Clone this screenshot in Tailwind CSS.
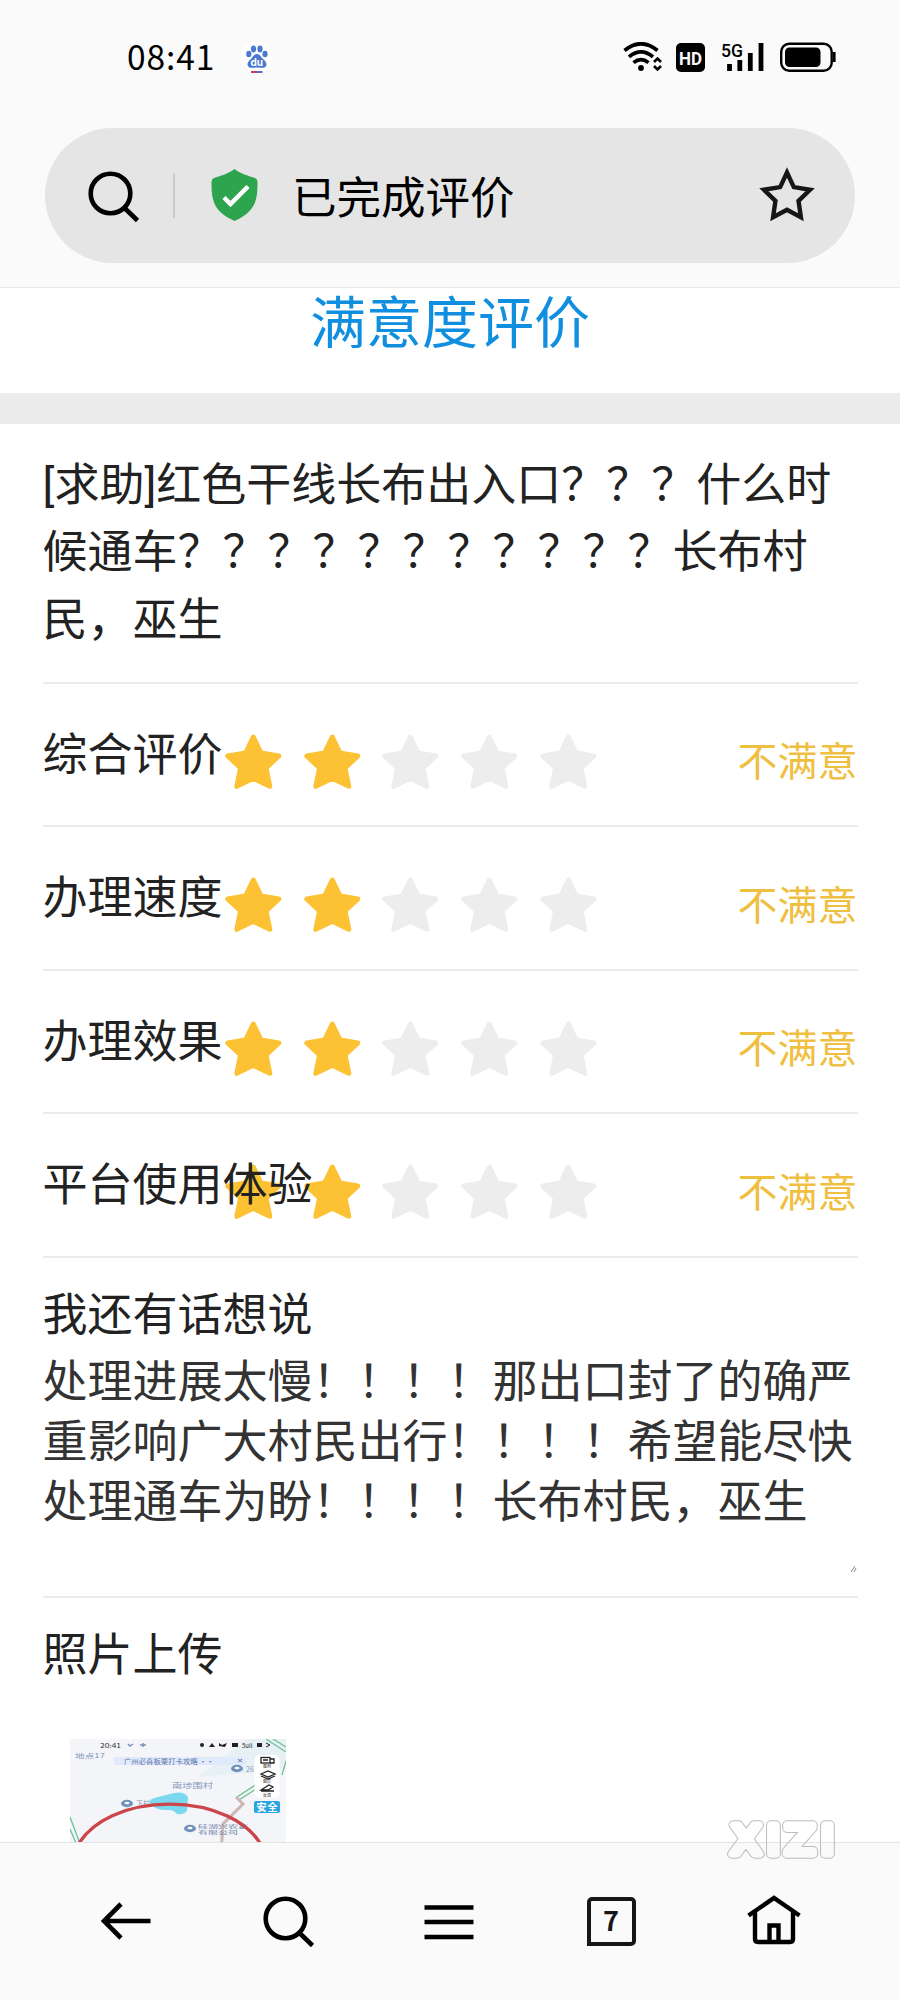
<!DOCTYPE html>
<html lang="zh-CN">
<head>
<meta charset="utf-8">
<title>已完成评价</title>
<script src="https://cdn.jsdelivr.net/npm/@tailwindcss/browser@4"></script>
</head>
<body class="bg-white">
<svg width="0" height="0" class="hidden">
  <symbol id="star" viewBox="0 0 57 56"><path d="M28.3 3 36 19 53.8 22 41 34 44.8 52.3 28.3 44.3 11.8 52.3 15.6 34 2.8 22 20.6 19Z" fill="currentColor" stroke="currentColor" stroke-width="5" stroke-linejoin="round"/></symbol>
  <symbol id="search" viewBox="0 0 52 52"><circle cx="22.5" cy="22.5" r="19.8" fill="none" stroke="#000" stroke-width="4.6"/><path d="M36 36.500 49.500 49.500" stroke="#000" stroke-width="4.600"/></symbol>
</svg>
<div class="flex h-[2000px] w-[900px] flex-col overflow-hidden bg-white font-['Roboto','Noto_Sans_CJK_SC',sans-serif] text-[45px] text-[#222]">
  <header class="h-[288px] shrink-0 border-b border-[#e8e8e8] bg-[#fafafa]">
    <div class="flex h-[128px] items-start pt-[33px] pr-[64px] pl-[127px]">
      <span class="h-[48px] w-[114px] font-['Noto_Sans_CJK_SC',sans-serif] text-[33.500px] leading-[45px] tracking-[0.9px] text-black">08:41</span>
      <svg class="mt-[8px] size-[32px]" viewBox="0 0 32 32"><circle cx="16" cy="16" r="16" fill="#fff"/><g fill="#4a78cf"><ellipse cx="7.800" cy="13" rx="2.600" ry="3.300"/><ellipse cx="12.500" cy="8" rx="2.600" ry="3.400"/><ellipse cx="19" cy="8" rx="2.600" ry="3.400"/><ellipse cx="24" cy="13" rx="2.600" ry="3.300"/><path d="M16 13c-3 0-4 3-6 5-2 1.800-4.500 4-3 7 1.500 2.800 5 1.600 9 1.600s7.500 1.200 9-1.600c1.500-3-1-5.200-3-7-2-2-3-5-6-5Z"/></g><text x="15.800" y="25" text-anchor="middle" font-size="10" font-weight="700" fill="#fff" font-family="Inter">du</text><path d="M10 31h6" stroke="#c9405a" stroke-width="2"/><path d="M16 31h5.500" stroke="#4a6fd0" stroke-width="2"/></svg>
      <div class="ml-auto flex h-[48px] items-center">
        <svg class="h-[30px] w-[39px]" viewBox="0 0 39 30" fill="none" stroke="#000"><g stroke-width="3.700"><path d="M1.500 8.500Q18-5 34.500 8.500"/><path d="M6 14.800Q18 4.800 30 14.800"/><path d="M10.500 20.600Q18 14.600 25.500 20.600"/></g><circle cx="18" cy="26" r="2.900" fill="#000" stroke="none"/><path d="m31 20 3.500-3.500L38 20M31 24l3.500 3.500L38 24" stroke-width="2.600"/></svg>
        <svg class="ml-[14px] size-[29px]" viewBox="0 0 29 29"><rect width="29" height="29" rx="5" fill="#000"/><text x="14.500" y="21.500" text-anchor="middle" textLength="23" lengthAdjust="spacingAndGlyphs" font-family="Roboto" font-size="19" font-weight="700" fill="#fafafa">HD</text></svg>
        <svg class="ml-[16px] h-[30px] w-[44px]" viewBox="0 0 44 30"><text x="0" y="15" font-family="Roboto" font-weight="500" font-size="17.500" textLength="22" lengthAdjust="spacingAndGlyphs">5G</text><path d="M8.500 22v7M18.800 18v11M29.300 11v18M40 1v28" stroke="#000" stroke-width="4.800" stroke-linecap="butt"/></svg>
        <svg class="ml-[15px] h-[30px] w-[56px]" viewBox="0 0 56 30"><rect x="1.200" y="1.700" width="50.500" height="27" rx="8" fill="none" stroke="#000" stroke-width="2.400"/><rect x="5" y="5.400" width="35.500" height="19.600" rx="4.500" fill="#000"/><path d="M54.300 10v10" stroke="#000" stroke-width="2.600"/></svg>
      </div>
    </div>
    <div class="mx-[45px] flex h-[135px] items-center rounded-full bg-[#e5e5e5] pr-[39px] pl-[43px]">
      <svg class="mt-[2px] size-[52px]"><use href="#search"/></svg>
      <i class="ml-[33px] h-[45px] w-[2px] bg-[#cbcbcb]"></i>
      <svg class="mb-[1px] ml-[36px] h-[52px] w-[47px]" viewBox="0 0 47 52"><path d="M23.500 0C17 5 9 7 3 9Q.500 10 .500 13C.500 31 2 42 23.500 52 45 42 46.500 31 46.500 13Q46.500 10 44 9C38 7 30 5 23.500 0Z" fill="#2da44e"/><path d="m13 28.500 6.500 6.500L37 17.500" fill="none" stroke="#fff" stroke-width="4.500"/></svg>
      <h1 class="mt-[6px] ml-[34px] text-[44.500px] leading-[60px] text-black">已完成评价</h1>
      <svg class="mb-[2px] ml-auto h-[56px] w-[58px]" viewBox="0 0 56 54"><path d="M28 6.500 34.200 19.800 49 22.200 38.500 32.300 40.700 47.300 28 40.500 15.300 47.300 17.500 32.300 7 22.200 21.800 19.800Z" transform="translate(-1.700 -1.600) scale(1.060)" fill="none" stroke="#161616" stroke-width="4"/></svg>
    </div>
  </header>

  <main class="flex h-[1554px] shrink-0 flex-col overflow-hidden">
    <h2 class="h-[105px] shrink-0 text-center text-[56px] leading-[72px] text-[#108ee0]">满意度评价</h2>
    <div class="h-[30.500px] shrink-0 bg-[#ececec]"></div>
    <div class="shrink-0 px-[42.500px]">
      <p class="h-[260px] border-b-2 border-[#ebebeb] pt-[28px] leading-[67.500px] whitespace-nowrap">[求助]红色干线长布出入口？？？什么时<br>候通车？？？？？？？？？？？长布村<br>民，巫生</p>
      <div id="ratings"></div>
      <section class="h-[340.500px] border-b-2 border-[#ebebeb] pt-[26px]">
        <h3 class="leading-[64px]">我还有话想说</h3>
        <div class="mt-[5px] h-[211px] leading-[60.200px] whitespace-nowrap text-[#333]">处理进展太慢！！！！那出口封了的确严<br>重影响广大村民出行！！！！希望能尽快<br>处理通车为盼！！！！长布村民，巫生</div>
        <svg class="ml-auto size-[10px]" viewBox="0 0 10 10"><path d="m3 8 4-6M6 8l2-4" stroke="#888" stroke-width="1"/></svg>
      </section>
      <h3 class="mt-[26px] leading-[64px]">照片上传</h3>
      <svg class="mt-[51px] ml-[27.500px] h-[140px] w-[216px]" viewBox="0 0 216 140" font-family="Noto Sans CJK SC">
        <rect width="216" height="140" fill="#f3f5f8"/>
        <path d="M128 38 178 0h38v30l-38 4Z" fill="#e7f0f5"/>
        <g fill="none" stroke="#6fc293" stroke-width="1.300"><path d="m196 0 20 13M203 0l13 8M167 58l20-13M169 61l20-13M0 78l9 24M0 90l6 14M216 22l-4 14"/></g>
        <path d="m166 58 7 7-20 20-2 30" fill="none" stroke="#cdb6b6" stroke-width="3"/>
        <rect x="44" y="18" width="132" height="8" rx="2" fill="#e0eafb"/>
        <g font-size="7">
          <text x="30" y="9" textLength="21" lengthAdjust="spacingAndGlyphs" fill="#333" font-size="6">20:41</text>
          <path d="m58 5 2 2 3-2M70 6h6M73 4v4" stroke="#7b8dbb" fill="none" stroke-width="1.400"/>
          <g fill="#222"><circle cx="132" cy="6" r="2"/><path d="m139 8 3-4 3 4Z"/><path d="m149 4 3 2 5-2-2 4-6-1Z"/><rect x="162" y="4" width="6" height="4"/><text x="172" y="9" font-size="6">5ull</text><rect x="187" y="4" width="5" height="4"/><path d="m196 4 4 2-4 2" fill="none" stroke="#222"/></g>
          <text x="5" y="19" textLength="30" lengthAdjust="spacingAndGlyphs" fill="#8294b8" font-size="6">地点17</text>
          <text x="54" y="24.500" textLength="90" lengthAdjust="spacingAndGlyphs" fill="#5e73ad" font-size="6.500">广州必喜板栗打卡攻略 ··</text>
          <path d="m168 20 4 3m0-3-4 3" stroke="#5e73ad"/>
          <text x="102" y="49" textLength="41" lengthAdjust="spacingAndGlyphs" fill="#8798bd">南埗围村</text>
          <text x="66" y="67" fill="#8798bd">下村</text>
          <g fill="#6f82a8" font-size="5"><text x="128" y="89" textLength="50" lengthAdjust="spacingAndGlyphs">硅湖兴农畜</text><text x="128" y="94.500" textLength="40" lengthAdjust="spacingAndGlyphs">有限公司</text></g>
          <text x="176" y="33" fill="#8798bd">26</text>
        </g>
        <path d="M80 64Q78 60 88 58L104 54Q114 52 118 58l-1 14q-4 4-10 3-3-4-8-4-14 1-19-7Z" fill="#7bd8f1"/>
        <path d="M5 112C32 49 168 50 194 112" fill="none" stroke="#cb4549" stroke-width="3.400"/>
        <g fill="#6d93bd"><ellipse cx="57" cy="64.500" rx="6" ry="3.700"/><ellipse cx="120" cy="89.500" rx="6" ry="3.700"/><ellipse cx="167" cy="29.500" rx="6" ry="3.700"/></g>
        <g fill="#fff"><ellipse cx="57" cy="64" rx="2.500" ry="1.300"/><ellipse cx="120" cy="89" rx="2.500" ry="1.300"/><ellipse cx="167" cy="29" rx="2.500" ry="1.300"/></g>
        <rect x="184.500" y="16" width="25" height="43" rx="5" fill="#fff"/>
        <g fill="none" stroke="#222" stroke-width="1.300"><rect x="191" y="18.500" width="9" height="5.500"/><path d="M193 21h5M200 20h4v4h-4M191 35l7-3 7 3-7 3ZM191 37l7 3 7-3M191 51l8-5 4 2-5 3ZM191 52h13"/></g>
        <g font-size="4" fill="#333"><text x="193" y="29">图例</text><text x="193" y="44">图层</text><text x="193" y="57.500">反馈</text></g>
        <rect x="184" y="62" width="26" height="12" rx="2" fill="#2aa5df"/>
        <text x="197" y="71.700" text-anchor="middle" font-size="10" font-weight="700" textLength="21" fill="#fff">安全</text>
      </svg>
    </div>
  </main>

  <nav class="relative grid h-[158px] shrink-0 grid-cols-5 items-center justify-items-center border-t border-[#e4e4e4] bg-[#fafafa] px-[45px]">
    <svg class="mb-[2px] h-[40px] w-[50px]" viewBox="0 0 50 40" fill="none" stroke="#000" stroke-width="4.600"><path d="M3 20h46.500M20 3 3 20l17 17"/></svg>
    <svg class="ml-[1px] size-[52px]"><use href="#search"/></svg>
    <svg class="mr-[3px] h-[36px] w-[50px]" viewBox="0 0 50 36"><path d="M.500 3.500h49M.500 18h49M.500 33h49" stroke="#000" stroke-width="4.600"/></svg>
    <div class="mr-[2px] mb-[1px] flex size-[49px] items-center justify-center rounded-[5px] rounded-bl-none border-[4.500px] border-[#161616] pb-[3px] font-['Noto_Sans_CJK_SC',sans-serif] text-[27px] leading-none font-bold text-[#161616]">7</div>
    <svg class="mb-[3px] h-[50px] w-[54px]" viewBox="0 0 54 50" fill="none" stroke="#000" stroke-width="4.400"><path d="M1.500 20.500 27 3l25.500 17.500M8 17v27q0 3 3 3h32q3 0 3-3V17M22.500 47V30.500h9V47"/></svg>
    <svg class="absolute -top-[26px] left-[720px] h-[46px] w-[122px]" viewBox="720 1816 122 46">
      <defs>
        <mask id="outline" maskUnits="userSpaceOnUse" x="720" y="1816" width="122" height="46">
          <g font-family="DejaVu Sans" font-size="39" text-anchor="middle" stroke-linejoin="round" transform="translate(780 0) scale(1.120 1) translate(-780 0)">
            <text x="749.600 774.200 797.900 822.400" y="1853.300" fill="#fff" stroke="#fff" stroke-width="9.400">XIZI</text>
            <text x="749.600 774.200 797.900 822.400" y="1853.300" fill="#000" stroke="#000" stroke-width="7.600" aria-hidden="true">XIZI</text>
          </g>
        </mask>
      </defs>
      <rect x="720" y="1816" width="122" height="46" fill="#bdbdbd" mask="url(#outline)"/>
    </svg>
  </nav>
</div>
<template id="row">
  <div class="flex h-[143.500px] items-start border-b-2 border-[#ebebeb] whitespace-nowrap">
    <span class="relative z-10 mt-[40px] w-[182.500px] leading-[64px]"></span>
    <div class="mt-[50px] flex gap-[21.700px] text-[#ededed]">
      <svg class="h-[56px] w-[57px] text-[#fcc233]"><use href="#star"/></svg>
      <svg class="h-[56px] w-[57px] text-[#fcc233]"><use href="#star"/></svg>
      <svg class="h-[56px] w-[57px]"><use href="#star"/></svg>
      <svg class="h-[56px] w-[57px]"><use href="#star"/></svg>
      <svg class="h-[56px] w-[57px]"><use href="#star"/></svg>
    </div>
    <b class="mt-[49.500px] ml-auto text-[40px] leading-[60px] font-normal text-[#efbf42]">不满意</b>
  </div>
</template>
<script>
  const list = document.getElementById('ratings');
  for (const name of ['综合评价', '办理速度', '办理效果', '平台使用体验']) {
    const row = document.getElementById('row').content.cloneNode(true);
    row.querySelector('span').textContent = name;
    list.append(row);
  }
</script>
</body>
</html>
